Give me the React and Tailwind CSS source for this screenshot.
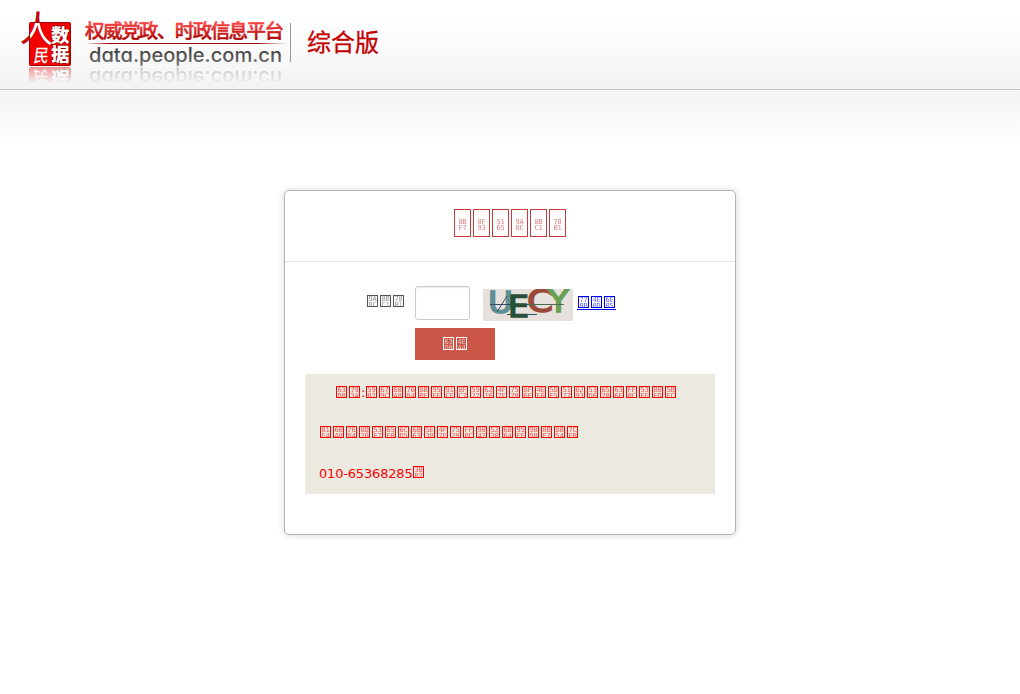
import React from "react";

// A character cell: a framed box holding the character's code point.
function Cell({ ch, large, tall }) {
  const code = ch.codePointAt(0).toString(16).toUpperCase().padStart(4, "0");
  const size = large ? "w-[17px] h-7 pt-[9px]" : tall ? "w-[11px] h-[13px] pt-px" : "w-[11px] h-3";
  const row = "h-1.5 shrink-0 leading-[6px] opacity-65 -tracking-[0.2px]";
  return (
    <span
      aria-label={ch}
      className={`${size} inline-flex shrink-0 flex-col items-center overflow-hidden whitespace-nowrap border border-current font-['DejaVu_Sans_Mono',monospace] text-[7px]`}
    >
      <span className={row}>{code.slice(0, 2)}</span>
      <span className={row}>{code.slice(2)}</span>
    </span>
  );
}

function Cells({ text, large, tall }) {
  return (
    <span className="flex gap-0.5">
      {[...text].map((ch, i) => (
        <Cell key={i} ch={ch} large={large} tall={tall} />
      ))}
    </span>
  );
}

function Seal() {
  return (
    <g fontFamily="'Noto Sans CJK SC', sans-serif">
      <g transform="translate(20 41) rotate(3) scale(0.92 1)">
        <text fontSize="36" fontWeight="400" fill="#c00" stroke="#8b0000" strokeWidth="0.4">人</text>
      </g>
      <rect x="29.5" y="22.5" width="41" height="43" rx="1" fill="#f30000" stroke="#a80000" />
      <g clipPath="url(#sealClip)" fill="#fff">
        <g transform="translate(20 41) rotate(3) scale(0.92 1)">
          <text fontSize="36" fontWeight="400" stroke="#900" strokeWidth="1" paintOrder="stroke">人</text>
        </g>
        <g transform="translate(33 62) skewX(-8)">
          <text fontSize="18" fontWeight="500" textLength="15" lengthAdjust="spacingAndGlyphs">民</text>
        </g>
        <g fontSize="18.5" fontWeight="900" stroke="#8b0000" strokeWidth="1.2" paintOrder="stroke">
          <text x="51" y="41.5">数</text>
          <text x="51" y="61">据</text>
        </g>
      </g>
    </g>
  );
}

function Domain() {
  return (
    <text
      x="89"
      y="62"
      className="[font-feature-settings:'cv11']"
      fontFamily="Inter, sans-serif"
      fontSize="19.5"
      fontWeight="500"
      fill="url(#grey)"
      textLength="193"
      lengthAdjust="spacingAndGlyphs"
    >
      data.people.com.cn
    </text>
  );
}

function Logo() {
  return (
    <svg width="400" height="88" viewBox="0 0 400 88" className="block">
      <defs>
        <linearGradient id="red" x1="0" y1="22" x2="0" y2="41" gradientUnits="userSpaceOnUse">
          <stop offset="0" stopColor="#ff4747" />
          <stop offset="1" stopColor="#a60000" />
        </linearGradient>
        <linearGradient id="grey" x1="0" y1="46" x2="0" y2="66" gradientUnits="userSpaceOnUse">
          <stop offset="0" stopColor="#333" />
          <stop offset="1" stopColor="#777" />
        </linearGradient>
        <linearGradient id="rule">
          <stop offset="0" stopColor="#900" stopOpacity="0" />
          <stop offset="0.12" stopColor="#900" />
          <stop offset="0.85" stopColor="#900" />
          <stop offset="1" stopColor="#900" stopOpacity="0" />
        </linearGradient>
        <linearGradient id="fade" x1="0" y1="67" x2="0" y2="83" gradientUnits="userSpaceOnUse">
          <stop offset="0" stopColor="#fff" stopOpacity="0.4" />
          <stop offset="1" stopColor="#fff" stopOpacity="0" />
        </linearGradient>
        <mask id="fadeMask" maskUnits="userSpaceOnUse" x="0" y="67" width="400" height="16">
          <rect x="0" y="67" width="400" height="16" fill="url(#fade)" />
        </mask>
        <clipPath id="sealClip">
          <rect x="30" y="23" width="40" height="42" />
        </clipPath>
      </defs>
      <Seal />
      <g mask="url(#fadeMask)">
        <g transform="translate(0 133) scale(1 -1)">
          <Seal />
          <g opacity="0.85">
            <Domain />
          </g>
        </g>
      </g>
      <text x="85" y="38" fontFamily="'Noto Sans CJK SC', sans-serif" fontSize="19.5" fontWeight="500" fill="url(#red)" stroke="url(#red)" strokeWidth="0.4" textLength="199">
        权威党政、时政信息平台
      </text>
      <rect x="85" y="43" width="201" height="1" fill="url(#rule)" />
      <Domain />
      <rect x="290" y="23" width="1" height="39" fill="#999" />
      <text x="307" y="51" fontFamily="'Noto Sans CJK SC', sans-serif" fontSize="24" fill="#c30000" textLength="72" stroke="#c30000" strokeWidth="0.3">
        综合版
      </text>
    </svg>
  );
}

function Captcha() {
  return (
    <svg width="90" height="32" viewBox="0 0 90 32" className="block" fontFamily="'DejaVu Sans', sans-serif" strokeWidth="1.6">
      <rect width="90" height="32" fill="#e6e1dc" />
      <text x="5" y="23.5" fontSize="31" fill="#5f8f96" stroke="#5f8f96" textLength="25" lengthAdjust="spacingAndGlyphs">U</text>
      <path d="M7 15.5H81M14 23L24 7M24 25.5H54" stroke="#344f65" strokeWidth="1" fill="none" />
      <text x="25" y="28" fontSize="31" fill="#285039" stroke="#285039" textLength="21" lengthAdjust="spacingAndGlyphs">E</text>
      <text x="44" y="22.5" fontSize="32" fill="#994a3b" stroke="#994a3b" textLength="26" lengthAdjust="spacingAndGlyphs">C</text>
      <text x="65" y="22.5" fontSize="32" fill="#67a052" stroke="#67a052" textLength="21" lengthAdjust="spacingAndGlyphs">Y</text>
      <path d="M46 15.5H81" stroke="#477052" strokeWidth="1" />
    </svg>
  );
}

export default function App() {
  return (
    <div className="flex h-[694px] flex-col overflow-hidden bg-white font-['DejaVu_Sans','Noto_Sans_CJK_SC',sans-serif] text-[13px]">
      <header className="h-[90px] shrink-0 border-b border-[#c4c4c4] bg-linear-to-b from-white from-20% to-[#f3f3f3]">
        <Logo />
      </header>
      <div className="h-14 shrink-0 border-t border-white bg-linear-to-b from-[#f3f3f3] to-white" />

      <main className="mx-auto mt-11 h-[345px] w-[452px] shrink-0 rounded-[5px] border border-[#b5b5b5] bg-white shadow-[0_0_7px_rgba(0,0,0,0.16)]">
        <h1 className="flex h-[71px] justify-center border-b border-[#e1e1e1] pt-[18px] text-[#cc3b3b]">
          <Cells text="请输入验证码" large />
        </h1>

        <form className="pt-6" onSubmit={(e) => e.preventDefault()}>
          <div className="flex h-[35px] items-start pl-[82px]">
            <label htmlFor="code" className="mr-[11px] mt-[9px] text-[#555]">
              <Cells text="验证码" />
            </label>
            <input id="code" className="h-[34px] w-[55px] rounded-[3px] border border-[#ccc] bg-white shadow-[inset_0_1px_1px_rgba(0,0,0,0.08)] outline-none" />
            <div className="ml-[13px] mt-[3px]">
              <Captcha />
            </div>
            <a href="#" className="ml-1 mt-[10px] h-3.5 border-b border-[#0000ee] px-px text-[#0000ee]">
              <Cells text="看不清" />
            </a>
          </div>
          <button type="submit" className="ml-[130px] mt-[7px] flex h-8 w-20 justify-center bg-[#cb5546] pt-[9px] text-white">
            <Cells text="提交" tall />
          </button>
        </form>

        <div className="ml-5 mt-3.5 h-[120px] w-[410px] bg-[#ece9e1] pl-[15px] pt-3 text-[#ff0000]">
          <div className="flex h-10 items-start pl-4">
            <Cells text="提示" />
            <span className="w-1.5 pl-px leading-[14px]">:</span>
            <Cells text="如果您的访问量过大或使用软件工具抓取数据，可能导" />
          </div>
          <div className="flex h-10 items-start">
            <Cells text="致您的账号无法正常使用，遇到此问题请联系" />
          </div>
          <div className="-ml-px flex items-start">
            <span className="mr-px w-[93px] whitespace-nowrap leading-[15px] tracking-[-0.18px]">010-65368285</span>
            <Cells text="。" />
          </div>
        </div>
      </main>
    </div>
  );
}
